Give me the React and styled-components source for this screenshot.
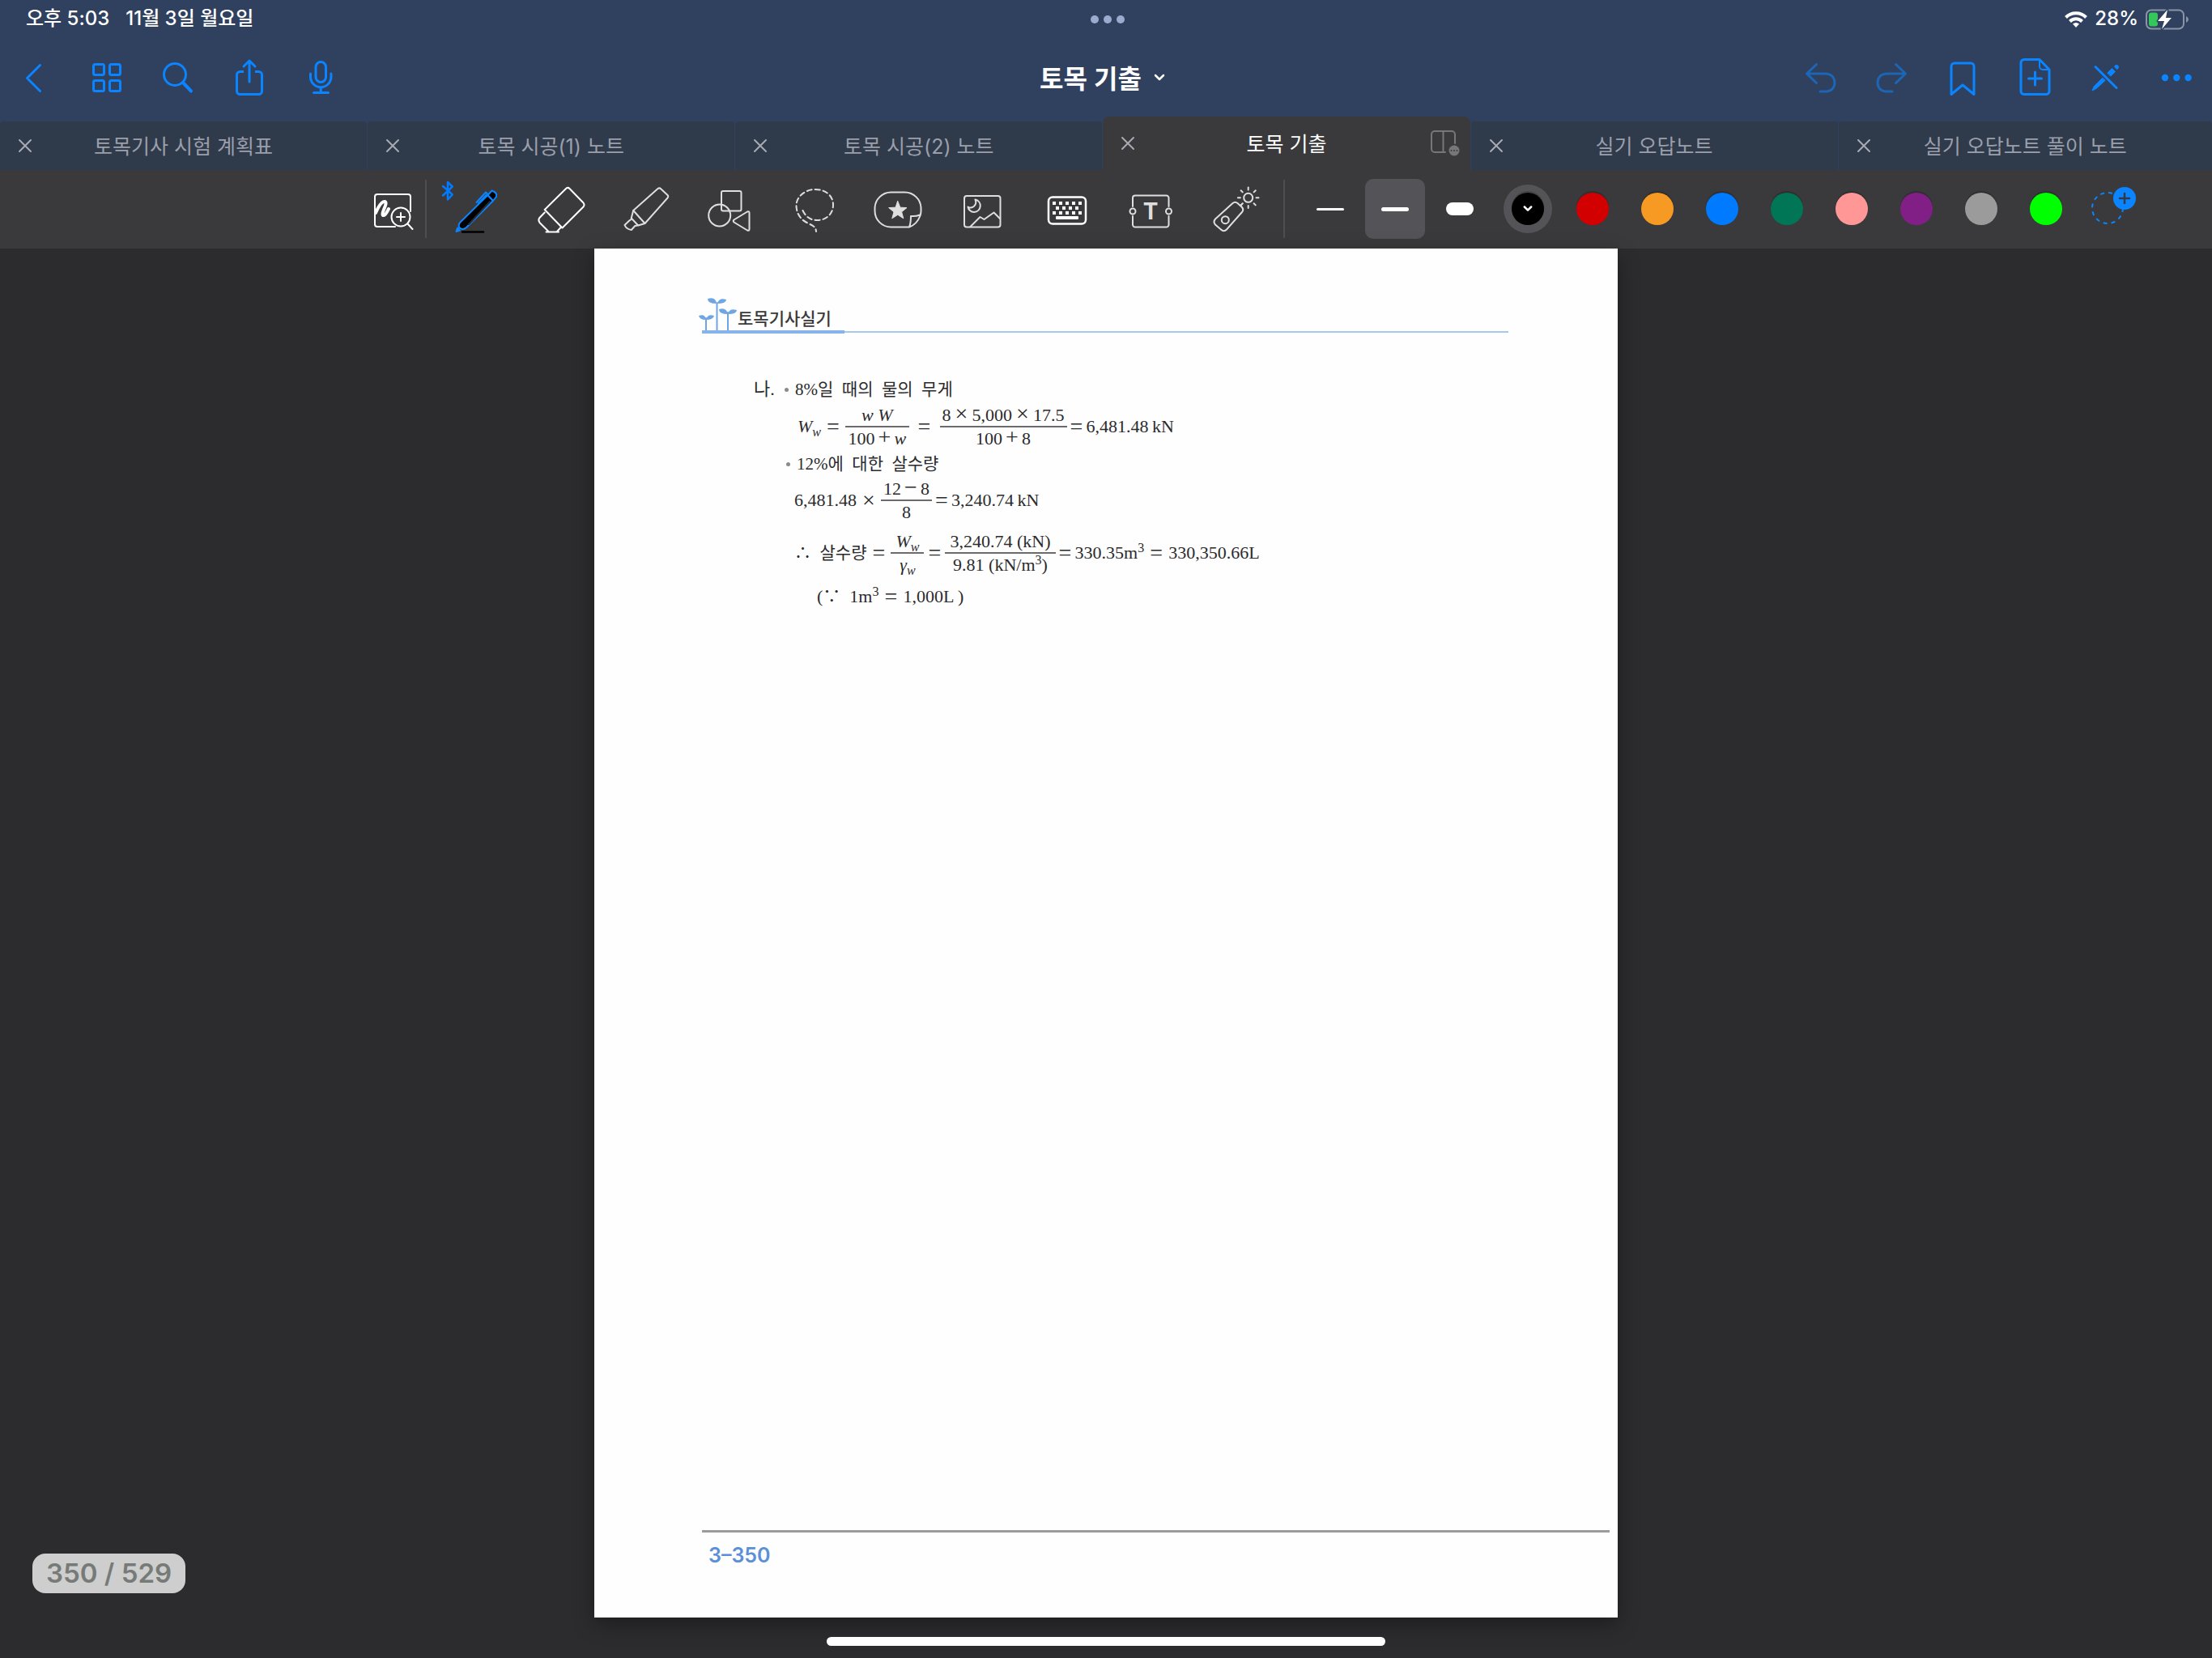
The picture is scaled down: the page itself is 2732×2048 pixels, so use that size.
import React, { useState } from "react";
import styled, { createGlobalStyle } from "styled-components";

const GlobalStyles = createGlobalStyle`
    * {
        margin: 0;
        padding: 0;
        box-sizing: border-box;
    }

    body {
        background: #2c2c2e;
        font-family: Inter, "Noto Sans CJK KR", sans-serif;
        color: #fff;
    }

    button {
        border: 0;
        background: none;
        color: inherit;
        font: inherit;
        cursor: pointer;
    }

    svg {
        display: block;
        fill: none;
        stroke: currentColor;
        stroke-linecap: round;
        stroke-linejoin: round;
        overflow: visible;
    }
`;

const tabs = [
    "토목기사 시험 계획표",
    "토목 시공(1) 노트",
    "토목 시공(2) 노트",
    "토목 기출",
    "실기 오답노트",
    "실기 오답노트 풀이 노트",
];

const colors = [
    { name: "검정", value: "#000000" },
    { name: "빨강", value: "#d20000" },
    { name: "주황", value: "#f79a23" },
    { name: "파랑", value: "#007aff" },
    { name: "초록", value: "#007656" },
    { name: "분홍", value: "#ff9797" },
    { name: "보라", value: "#821f87" },
    { name: "회색", value: "#9b9b9b" },
    { name: "연두", value: "#00ff00" },
];

const widths = [3, 5, 16];

const NavIcon = ({ children }) => (
    <svg width="48" height="48" viewBox="0 0 48 48" strokeWidth="3">
        {children}
    </svg>
);

const ToolIcon = ({ children }) => (
    <svg width="64" height="64" viewBox="0 0 64 64" strokeWidth="2">
        {children}
    </svg>
);

const leftActions = [
    { label: "뒤로", icon: <path d="M29.500 8.500 13.500 24.500 29.500 40.500" /> },
    {
        label: "썸네일",
        icon: (
            <>
                <rect x="7.500" y="7.500" width="13" height="13" rx="2" />
                <rect x="27.500" y="7.500" width="13" height="13" rx="2" />
                <rect x="7.500" y="27.500" width="13" height="13" rx="2" />
                <rect x="27.500" y="27.500" width="13" height="13" rx="2" />
            </>
        ),
    },
    {
        label: "검색",
        icon: (
            <>
                <circle cx="20" cy="20" r="13.500" />
                <path d="m30 30 10 10.500" strokeWidth="4" />
            </>
        ),
    },
    {
        label: "공유",
        icon: (
            <>
                <path d="M17 16.500h-4.500a4 4 0 0 0-4 4v20a4 4 0 0 0 4 4h23a4 4 0 0 0 4-4v-20a4 4 0 0 0-4-4H31" strokeLinecap="butt" />
                <path d="M24 29V4M17 10l7-7 7 7" />
            </>
        ),
    },
    {
        label: "녹음",
        icon: (
            <>
                <rect x="18" y="4.500" width="12.500" height="25" rx="6.250" />
                <path d="M11.500 19v4a12.700 12.700 0 0 0 25.400 0v-4M24.200 36v6M15.500 42.500h18" />
            </>
        ),
    },
];

const rightActions = [
    {
        label: "실행 취소",
        dim: true,
        icon: <path d="M19.500 7.500 7.500 19l12 11.500M8 19h22c8 0 12 5 12 11s-4 11-11 11h-7" />,
    },
    {
        label: "다시 실행",
        dim: true,
        icon: <path d="m29.500 7.500 12 11.500-12 11.500M41 19H19C11 19 7 24 7 30s4 11 11 11h7" />,
    },
    {
        label: "책갈피",
        icon: <path d="M10 44.500V10a4 4 0 0 1 4-4h20a4 4 0 0 1 4 4v34.500L24 33z" />,
    },
    {
        label: "페이지 추가",
        icon: (
            <>
                <path d="M31 1.500H12a4 4 0 0 0-4 4v35a4 4 0 0 0 4 4h27a4 4 0 0 0 4-4V14z" />
                <path d="M31 2v8a4 4 0 0 0 4 4h8" strokeWidth="2" />
                <path d="M25.500 17v16M17.500 25h16" />
            </>
        ),
    },
    {
        label: "읽기 모드",
        icon: (
            <>
                <path d="m12 10.500 26 26" />
                <path d="M20.500 24.500 10 35l-2 5 5-2.500 11-10zM27 18l5.500-5.500 4 4L31 22zM35.500 10l1.500-1.500q2-1 3 1t0 3L39 13.500z" fill="currentColor" strokeWidth="1" />
            </>
        ),
    },
    {
        label: "더 보기",
        icon: (
            <g fill="currentColor" stroke="none">
                <circle cx="10" cy="24" r="4.200" />
                <circle cx="24.300" cy="24" r="4.200" />
                <circle cx="38.600" cy="24" r="4.200" />
            </g>
        ),
    },
];

const sunRays = [0, 45, 90, 135, 180, 225, 270, 315];

const tools = [
    {
        label: "펜",
        icon: (
            <>
                <path d="M-10 4-3.500 9.500 1.700 14.500-4 20.500V-1L1.700 4.500-3.500 9.500-10 15.500" stroke="#007aff" strokeWidth="2.500" />
                <path d="M14 60.500h26" stroke="#000" strokeWidth="2.500" />
                <path d="m45.500 15 6.500 7L19 55q-4 3.500-7.500 1T11 49z" fill="#000" stroke="#0a84ff" />
                <path d="m22 51 26-28" stroke="#2c2c2e" strokeWidth="2" />
                <path d="m45.500 15 5-5.500q7 2.500 5.500 7.500L52 22z" fill="#000" stroke="#0a84ff" />
                <path d="M31.500 24 43 11.500l2.500 2.500M34 25l9.500-10" stroke="#0a84ff" />
                <path d="M8 55.500 6.500 60l4.500-1.500z" fill="#0a84ff" stroke="#0a84ff" />
            </>
        ),
    },
    {
        label: "지우개",
        icon: (
            <>
                <path d="M38.500 6.500q2-1.500 4 .5l17 17.500q2 2.500 0 5L33.500 55.500 11.700 33z" />
                <path d="m11.700 36.500-6.700 7q-1.500 2.500.5 5.500L16.500 60M27 60l4.500-5M13.500 60.500H29" />
            </>
        ),
    },
    {
        label: "형광펜",
        soft: true,
        icon: (
            <>
                <path d="M17.200 34 47.500 7q2-1.500 4 .5l8 7.500q1.500 1.500 0 3.500l-28 31.500z" />
                <path d="m17.200 34-2.500 9.500 8.500 9 8.300-2.500M12.500 46.300 6.500 52q2 5 8.300 6l4.500-5M15 44.500l-2.500 2M22.500 52.500l-3 .5" />
            </>
        ),
    },
    {
        label: "도형",
        soft: true,
        icon: (
            <>
                <rect x="22" y="10" width="24.500" height="24.500" rx="2" />
                <circle cx="19.700" cy="40" r="13.500" />
                <path d="M37.500 45.500 54 35.500q2.500-1 2.500 1.500v20q0 2.500-2.500 1.500L37.500 48.500q-1.500-1.500 0-3z" />
            </>
        ),
    },
    {
        label: "올가미",
        soft: true,
        icon: (
            <path
                d="M18.500 34c3 7 9 12 17.500 12 12 0 20-8 20-19S47 8 34 8 10.500 17 10.500 28c0 9 5 17 13 21s11 5 11.500 11"
                strokeDasharray="6 4"
            />
        ),
    },
    {
        label: "스티커",
        soft: true,
        icon: (
            <>
                <path d="M46 54.500H23.500a20 20 0 0 1-20-20v-3a20 20 0 0 1 20-20h17a20 20 0 0 1 20 20v3q0 3-1 6-4 10.500-13.500 14 2-5 2-13.500 6 .5 11-1.500" />
                <path d="m31.800 22.500 3 7.700 8.200.4-6.400 5.200 2.200 8-7-4.500-7 4.500 2.200-8-6.400-5.200 8.200-.4z" fill="currentColor" strokeWidth="1" />
            </>
        ),
    },
    {
        label: "이미지",
        soft: true,
        icon: (
            <>
                <rect x="10" y="16" width="44.500" height="38.500" rx="3" />
                <path d="m17.500 54 12-12 5 3 12-8.500 7.500 7.500" />
                <path d="M23.500 20.500c9 2 8 15-1.500 15.500-4 0-7-3-7.500-6.500 5 3 12-2 9-9z" />
            </>
        ),
    },
    {
        label: "키보드",
        icon: (
            <>
                <rect x="10" y="17.500" width="46" height="33" rx="5" strokeWidth="2.500" />
                <g fill="currentColor" stroke="none">
                    {[17, 25, 33, 41, 49].map((x) => (
                        <React.Fragment key={x}>
                            <rect x={x - 2} y="23" width="4" height="4" />
                            <rect x={x - 2} y="35" width="4" height="4" />
                        </React.Fragment>
                    ))}
                    {[21, 29, 37, 45].map((x) => (
                        <rect key={x} x={x - 2} y="29" width="4" height="4" />
                    ))}
                    <rect x="19" y="41" width="28" height="4" rx="1" />
                </g>
            </>
        ),
    },
    {
        label: "텍스트",
        soft: true,
        icon: (
            <>
                <path d="M10 29V18.500a3 3 0 0 1 3-3h38.500a3 3 0 0 1 3 3V29M10 41v10.500a3 3 0 0 0 3 3h38.500a3 3 0 0 0 3-3V41" />
                <circle cx="10" cy="35" r="3.500" />
                <circle cx="54.500" cy="35" r="3.500" />
                <text x="32" y="45" fontSize="28" fontWeight="700" textAnchor="middle" fill="currentColor" stroke="none">
                    T
                </text>
            </>
        ),
    },
    {
        label: "레이저 포인터",
        soft: true,
        icon: (
            <>
                <path d="M29.500 25q3-2.500 6 0l5.500 5q2.500 3 0 6L22 57.500q-3.500 3.500-7 0L8 51.500q-3-3.500 0-7z" />
                <circle cx="20.300" cy="45.700" r="4.500" />
                <circle cx="48.700" cy="18.300" r="5.500" />
                {sunRays.map((angle) => (
                    <path key={angle} d="M58.500 18.300h3" transform={`rotate(${angle} 48.700 18.300)`} />
                ))}
                <path d="m39.500 28 2-2.500" />
            </>
        ),
    },
];

const Chevron = ({ size = 12, width = 2.5 }) => (
    <svg width={size} height="8" viewBox="0 0 12 8" strokeWidth={width}>
        <path d="m1 1 5 5 5-5" />
    </svg>
);

function App() {
    const [active, setActive] = useState(3);
    const [tool, setTool] = useState("펜");
    const [penWidth, setPenWidth] = useState(5);
    const [color, setColor] = useState("#000000");

    return (
        <>
            <GlobalStyles />
            <Screen>
                <StatusBar>
                    <StatusSide>
                        <span>오후 5:03</span>
                        <span>11월 3일 월요일</span>
                    </StatusSide>
                    <Multitask aria-label="멀티태스킹">
                        <i />
                        <i />
                        <i />
                    </Multitask>
                    <StatusSide $end>
                        <svg width="28" height="20" viewBox="0 0 28 20" strokeWidth="4">
                            <path d="M1.500 7.500a17.500 17.500 0 0 1 25 0M6.500 12.500a10.500 10.500 0 0 1 15 0" strokeLinecap="butt" />
                            <path d="m14 20-4-4.500q4-3 8 0z" fill="currentColor" stroke="none" />
                        </svg>
                        <span>28%</span>
                        <svg width="54" height="26" viewBox="0 0 54 26">
                            <rect x="1" y="1.500" width="46" height="23" rx="6" stroke="#8a94a8" strokeWidth="2" />
                            <path d="M50 9q3 1.500 3 4t-3 4z" fill="#8a94a8" stroke="none" />
                            <rect x="4" y="4.500" width="11" height="17" rx="3" fill="#34c759" stroke="none" />
                            <path d="M27 1 15 15h8l-3 10 12-14h-7z" fill="#fff" stroke="#30415f" strokeWidth="3" paintOrder="stroke" />
                        </svg>
                    </StatusSide>
                </StatusBar>

                <NavBar>
                    <Actions>
                        {leftActions.map(({ label, icon }) => (
                            <NavButton key={label} aria-label={label}>
                                <NavIcon>{icon}</NavIcon>
                            </NavButton>
                        ))}
                    </Actions>
                    <TitleButton>
                        <span>토목 기출</span>
                        <Chevron />
                    </TitleButton>
                    <Actions $end>
                        {rightActions.map(({ label, icon, dim }) => (
                            <NavButton key={label} aria-label={label} $dim={dim}>
                                <NavIcon>{icon}</NavIcon>
                            </NavButton>
                        ))}
                    </Actions>
                </NavBar>

                <Tabs>
                    {tabs.map((title, i) => (
                        <Tab key={title} $active={i === active}>
                            <TabClose aria-label={`${title} 닫기`}>
                                <svg width="14" height="14" viewBox="0 0 14 14" strokeWidth="2">
                                    <path d="m0 0 14 14M14 0 0 14" />
                                </svg>
                            </TabClose>
                            <TabTitle onClick={() => setActive(i)}>{title}</TabTitle>
                            {i === active && (
                                <SplitButton aria-label="분할 보기">
                                    <svg width="36" height="32" viewBox="0 0 36 32" strokeWidth="2">
                                        <path d="M30 16V5a4 4 0 0 0-4-4H5a4 4 0 0 0-4 4v18a4 4 0 0 0 4 4h13M15.500 1v26" />
                                        <circle cx="29" cy="25" r="6.500" fill="currentColor" stroke="none" />
                                        <path d="M25.500 25h0M29 25h0M32.500 25h0" stroke="#3a3a3c" />
                                    </svg>
                                </SplitButton>
                            )}
                        </Tab>
                    ))}
                </Tabs>

                <Toolbar>
                    <ZoomButton aria-label="확대 창">
                        <ToolIcon>
                            <path d="M54 35V17a3 3 0 0 0-3-3H13a3 3 0 0 0-3 3v34a3 3 0 0 0 3 3h22" />
                            <path d="M11 37c3-7 7-14 11-14 3 1 1 5-1 10s-2 7 0 7 4-4 6-8" strokeWidth="4" />
                            <circle cx="42" cy="42" r="11.500" />
                            <path d="m50.500 50.500 6 6.500M42 37v10M37 42h10" />
                        </ToolIcon>
                    </ZoomButton>
                    <Divider />
                    <ToolGroup>
                        {tools.map(({ label, icon, soft }) => (
                            <ToolButton
                                key={label}
                                aria-label={label}
                                aria-pressed={tool === label}
                                $soft={soft}
                                onClick={() => setTool(label)}
                            >
                                <ToolIcon>{icon}</ToolIcon>
                            </ToolButton>
                        ))}
                    </ToolGroup>
                    <Divider />
                    <WidthGroup>
                        {widths.map((w) => (
                            <WidthButton
                                key={w}
                                aria-label={`두께 ${w}`}
                                $on={penWidth === w}
                                onClick={() => setPenWidth(w)}
                            >
                                <Stroke $size={w} />
                            </WidthButton>
                        ))}
                    </WidthGroup>
                    {colors.map(({ name, value }) => (
                        <ColorButton
                            key={value}
                            aria-label={name}
                            $on={color === value}
                            onClick={() => setColor(value)}
                        >
                            <Swatch $color={value}>{color === value && <Chevron size={10} width={3} />}</Swatch>
                        </ColorButton>
                    ))}
                    <AddColor aria-label="색상 추가">
                        <svg width="56" height="56" viewBox="0 0 56 56" strokeWidth="2">
                            <circle cx="24" cy="27" r="19" strokeDasharray="5 5" strokeLinecap="butt" />
                            <circle cx="45" cy="15" r="14" fill="currentColor" stroke="none" />
                            <path d="M45 9v12M39 15h12" stroke="#2f3a4a" strokeWidth="2.500" />
                        </svg>
                    </AddColor>
                </Toolbar>

                <Canvas>
                    <Page>
                        <PageHead>
                            <svg width="48" height="42" viewBox="0 0 48 42" color="#6fa5e3" strokeWidth="2">
                                <path d="M9 40V25M22.500 40V6M36 40V18" />
                                <g fill="currentColor" stroke="none">
                                    <path d="M22 7Q11 7 11 1q10-3 11 6zM23 7q11 0 11-5-9-3-11 5z" />
                                    <path d="M36 20q-11 0-11-6 9-3 11 6zM36 20q11 0 11-5-9-3-11 5z" />
                                    <path d="M9 27Q1 27 0 22q8-3 9 5zM9 27q9 0 10-5-8-3-10 5z" />
                                </g>
                            </svg>
                            <BookTitle>토목기사실기</BookTitle>
                        </PageHead>
                        <HeadRule />

                        <Solution>
                            <Line>
                                <Label>나.</Label>
                                <Dot />
                                <Phrase>8%일  때의  물의  무게</Phrase>
                            </Line>
                            <Line $indent={54} $height={58}>
                                <Var>W<sub>w</sub></Var>
                                <Op $width={30}>=</Op>
                                <Fraction>
                                    <Part $pad={20}><Var>w W</Var></Part>
                                    <Part>100<Op>+</Op><Var>w</Var></Part>
                                </Fraction>
                                <Op $width={38}>=</Op>
                                <Fraction>
                                    <Part>8<Op $width={26}>×</Op>5,000<Op $width={26}>×</Op>17.5</Part>
                                    <Part>100<Op>+</Op>8</Part>
                                </Fraction>
                                <Op>=</Op>
                                <span>6,481.48{"\u2009"}kN</span>
                            </Line>
                            <Line $indent={40}>
                                <Dot />
                                <Phrase>12%에  대한  살수량</Phrase>
                            </Line>
                            <Line $indent={50} $height={56}>
                                <span>6,481.48</span>
                                <Op $width={30}>×</Op>
                                <Fraction>
                                    <Part>12<Op>−</Op>8</Part>
                                    <Part>8</Part>
                                </Fraction>
                                <Op>=</Op>
                                <span>3,240.74{"\u2009"}kN</span>
                            </Line>
                            <Line $indent={50} $height={74}>
                                <Phrase>∴  살수량</Phrase>
                                <Op $width={30}>=</Op>
                                <Fraction>
                                    <Part $pad={6}><Var>W<sub>w</sub></Var></Part>
                                    <Part $pad={6}><Var>γ<sub>w</sub></Var></Part>
                                </Fraction>
                                <Op $width={26}>=</Op>
                                <Fraction>
                                    <Part $pad={6}>3,240.74 (kN)</Part>
                                    <Part $pad={6}>9.81 (kN/m<sup>3</sup>)</Part>
                                </Fraction>
                                <Op>=</Op>
                                <span>330.35m<sup>3</sup></span>
                                <Op $width={30}>=</Op>
                                <span>330,350.66L</span>
                            </Line>
                            <Line $indent={78}>
                                <span>(∵  1m<sup>3</sup></span>
                                <Op $width={30}>=</Op>
                                <span>1,000L )</span>
                            </Line>
                        </Solution>

                        <PageFoot>3–350</PageFoot>
                    </Page>
                </Canvas>

                <PageCounter>350 / 529</PageCounter>
                <HomeIndicator />
            </Screen>
        </>
    );
}

export default App;

const Screen = styled.div`
    position: relative;
    display: flex;
    flex-direction: column;
    min-height: 100vh;
    overflow: hidden;
`;

const StatusBar = styled.div`
    display: grid;
    grid-template-columns: 1fr auto 1fr;
    align-items: center;
    height: 48px;
    padding: 0 28px 0 32px;
    background: #30415f;
    font-size: 24px;
    font-weight: 500;
    line-height: 28px;
`;

const StatusSide = styled.div`
    display: flex;
    align-items: center;
    justify-content: ${({ $end }) => ($end ? "flex-end" : "flex-start")};
    gap: ${({ $end }) => ($end ? "9px" : "20px")};

    span {
        padding-bottom: 2px;
    }
`;

const Multitask = styled.button`
    display: flex;
    gap: 6px;

    i {
        width: 10px;
        height: 10px;
        border-radius: 50%;
        background: #9cabcd;
    }
`;

const NavBar = styled.header`
    display: grid;
    grid-template-columns: 1fr auto 1fr;
    align-items: center;
    height: 96px;
    background: #30415f;
`;

const Actions = styled.div`
    display: flex;
    justify-content: ${({ $end }) => ($end ? "flex-end" : "flex-start")};
`;

const NavButton = styled.button`
    display: flex;
    justify-content: center;
    width: 88px;
    color: ${({ $dim }) => ($dim ? "#1d65b5" : "#0a84ff")};
`;

const TitleButton = styled.button`
    display: flex;
    align-items: center;
    gap: 16px;
    padding-right: 10px;
    font-size: 32px;
    font-weight: 600;

    span {
        padding-bottom: 3px;
    }
`;

const Tabs = styled.nav`
    display: grid;
    grid-template-columns: repeat(5, 166fr) 169fr;
    align-items: end;
    gap: 1px;
    background: #30415f;
`;

const Tab = styled.div`
    display: grid;
    grid-template-columns: 62px 1fr 62px;
    align-items: center;
    height: ${({ $active }) => ($active ? "66px" : "60px")};
    border-radius: ${({ $active }) => ($active ? "8px 8px 0 0" : "4px 4px 0 0")};
    background: ${({ $active }) => ($active ? "#3a3a3c" : "#2f3a4a")};
    color: ${({ $active }) => ($active ? "#fff" : "#9a9fab")};
`;

const TabClose = styled.button`
    display: flex;
    justify-content: center;
    color: #a8abb3;
`;

const TabTitle = styled.button`
    padding-bottom: 3px;
    font-size: 25px;
    white-space: nowrap;
`;

const SplitButton = styled.button`
    display: flex;
    justify-content: center;
    color: #77777b;
`;

const Toolbar = styled.div`
    display: flex;
    align-items: center;
    justify-content: flex-end;
    height: 97px;
    padding: 0 97px 1px 0;
    background: #3a3a3c;
`;

const ZoomButton = styled.button`
    display: flex;
    justify-content: center;
    width: 80px;
`;

const Divider = styled.div`
    width: 2px;
    height: 72px;
    background: #4e4e50;
`;

const ToolGroup = styled.div`
    display: flex;
    padding: 0 8px 0 10px;
`;

const ToolButton = styled.button`
    display: flex;
    justify-content: center;
    width: 104px;
    color: ${({ $soft }) => ($soft ? "#dededf" : "#fff")};
`;

const WidthGroup = styled.div`
    display: flex;
    gap: 6px;
    padding: 0 7px 0 19px;
`;

const WidthButton = styled.button`
    display: flex;
    align-items: center;
    justify-content: center;
    width: 74px;
    height: 74px;
    border-radius: 10px;
    background: ${({ $on }) => ($on ? "#545458" : "transparent")};
`;

const Stroke = styled.span`
    width: 34px;
    height: ${({ $size }) => $size}px;
    border-radius: 8px;
    background: #fff;
`;

const ColorButton = styled.button`
    display: flex;
    align-items: center;
    justify-content: center;
    width: 60px;
    height: 60px;
    margin: 0 10px;
    border-radius: 50%;
    background: ${({ $on }) => ($on ? "#545458" : "transparent")};
`;

const Swatch = styled.span`
    display: flex;
    align-items: center;
    justify-content: center;
    width: 40px;
    height: 40px;
    border-radius: 50%;
    background: ${({ $color }) => $color};
    box-shadow: 0 -2px 1px rgba(0, 0, 0, 0.2);
`;

const AddColor = styled.button`
    margin-left: 12px;
    color: #0a84ff;
`;

const Canvas = styled.main`
    flex: 1;
    padding-bottom: 50px;
    background: #2c2c2e;
`;

const Page = styled.article`
    display: flex;
    flex-direction: column;
    width: 100%;
    max-width: 1264px;
    min-height: 1691px;
    margin: 0 auto;
    padding: 62px 10px 60px 133px;
    background: #fefefe;
    box-shadow: 0 8px 24px rgba(0, 0, 0, 0.35);
    color: #2b2b2d;
`;

const PageHead = styled.div`
    display: flex;
    align-items: center;
    height: 39px;
    margin-left: -4px;
`;

const BookTitle = styled.h1`
    padding-top: 11px;
    font-size: 21px;
    font-weight: 500;
    line-height: 24px;
    color: #3a3a3a;
`;

const HeadRule = styled.div`
    height: 4px;
    margin-right: 125px;
    background:
        linear-gradient(#86b3ea, #86b3ea) 0 0 / 176px 4px no-repeat,
        linear-gradient(#a6c8ea, #a6c8ea) 0 1px / 100% 2px no-repeat;
`;

const Solution = styled.section`
    padding: 52px 0 0 64px;
    font-family: "Liberation Serif", "Noto Sans CJK KR", serif;
    font-size: 22px;
    line-height: 28px;
    white-space: pre;

    sub,
    sup {
        font-size: 16px;
        line-height: 0;
    }
`;

const Line = styled.div`
    display: flex;
    align-items: center;
    height: ${({ $height = 34 }) => $height}px;
    padding-left: ${({ $indent = 0 }) => $indent}px;
`;

const Label = styled.span`
    width: 38px;
`;

const Phrase = styled.span`
    font-size: 21px;
`;

const Dot = styled.span`
    width: 5px;
    height: 5px;
    margin-right: 8px;
    border-radius: 50%;
    background: #8b8b8d;
`;

const Var = styled.i`
    font-style: italic;
`;

const Op = styled.span`
    display: inline-block;
    width: ${({ $width = 24 }) => $width}px;
    font-size: 28px;
    line-height: 24px;
    text-align: center;
`;

const Fraction = styled.span`
    display: flex;
    flex-direction: column;
    align-items: stretch;
    text-align: center;
`;

const Part = styled.span`
    height: 28px;
    padding: 0 ${({ $pad = 3 }) => $pad}px;

    &:first-child {
        height: 29px;
        border-bottom: 2px solid #6b6b6d;
    }
`;

const PageFoot = styled.footer`
    margin-top: auto;
    padding: 11px 8px 0;
    border-top: 3px solid #9b9b9b;
    font-size: 25px;
    font-weight: 600;
    line-height: 34px;
    color: #5b90d9;
`;

const PageCounter = styled.div`
    position: absolute;
    bottom: 80px;
    left: 40px;
    padding: 0 17px;
    border-radius: 16px;
    background: #cecece;
    color: #777b78;
    font-size: 33px;
    font-weight: 600;
    line-height: 49px;
`;

const HomeIndicator = styled.div`
    position: absolute;
    bottom: 15px;
    left: 50%;
    width: 690px;
    height: 11px;
    border-radius: 6px;
    background: #fff;
    transform: translateX(-50%);
`;
